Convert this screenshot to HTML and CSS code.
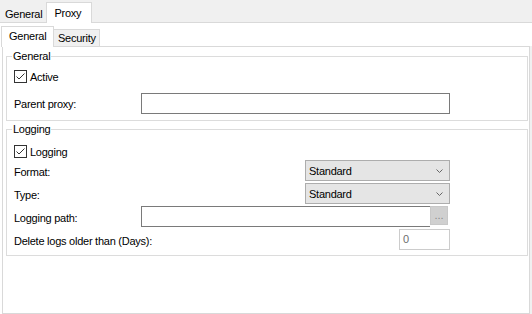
FILE: index.html
```html
<!DOCTYPE html>
<html lang="en">
<head>
  <meta charset="UTF-8" />
  <title>Proxy Settings</title>
  <link rel="stylesheet" href="styles.css">
</head>
<body>
  <div class="window">

    <div class="outer-tabs">
      <div class="tab">General</div>
      <div class="tab active">Proxy</div>
    </div>

    <div class="inner-tabs">
      <div class="tab active">General</div>
      <div class="tab">Security</div>
    </div>

    <div class="page-row">
      <div class="page">

        <!-- General group -->
        <fieldset class="group group-general">
          <legend>General</legend>
          <div class="check-row">
            <span class="check">
              <svg width="13" height="13" viewBox="0 0 13 13"><rect x="0.5" y="0.5" width="12" height="12" fill="#fff" stroke="#333"/><polyline points="2.5,6.5 5,9 10.5,3.5" fill="none" stroke="#333" stroke-width="1"/></svg>
            </span>
            <span>Active</span>
          </div>
          <div class="row row-first">
            <span class="label">Parent proxy:</span>
            <div class="textbox wide"></div>
          </div>
        </fieldset>

        <!-- Logging group -->
        <fieldset class="group group-logging">
          <legend>Logging</legend>
          <div class="check-row">
            <span class="check">
              <svg width="13" height="13" viewBox="0 0 13 13"><rect x="0.5" y="0.5" width="12" height="12" fill="#fff" stroke="#333"/><polyline points="2.5,6.5 5,9 10.5,3.5" fill="none" stroke="#333" stroke-width="1"/></svg>
            </span>
            <span>Logging</span>
          </div>
          <div class="row">
            <span class="label low">Format:</span>
            <div class="select">
              <span>Standard</span>
              <svg width="7" height="4" viewBox="0 0 7 4"><polyline points="0.5,0.5 3.5,3.5 6.5,0.5" fill="none" stroke="#666" stroke-width="1"/></svg>
            </div>
          </div>
          <div class="row">
            <span class="label low">Type:</span>
            <div class="select">
              <span>Standard</span>
              <svg width="7" height="4" viewBox="0 0 7 4"><polyline points="0.5,0.5 3.5,3.5 6.5,0.5" fill="none" stroke="#666" stroke-width="1"/></svg>
            </div>
          </div>
          <div class="row">
            <span class="label low">Logging path:</span>
            <div class="textbox path"></div>
            <div class="browse">...</div>
          </div>
          <div class="row">
            <span class="label low">Delete logs older than (Days):</span>
            <div class="number">0</div>
          </div>
        </fieldset>

      </div>
      <div class="page-edge"></div>
    </div>

  </div>
</body>
</html>
```

FILE: styles.css
```css
body {
  margin: 0;
  font-family: "Liberation Sans", Arial, sans-serif;
  font-size: 11px;
  letter-spacing: -0.25px;
  color: #000;
  background: #fff;
}

.window {
  width: 532px;
  height: 314px;
  overflow: hidden;
}

/* outer tab strip */
.outer-tabs {
  display: flex;
  align-items: flex-end;
  height: 22px;
  background: #f0f0f0;
  border-bottom: 1px solid #d9d9d9;
}

.outer-tabs .tab {
  box-sizing: border-box;
  height: 18px;
  margin-left: 1px;
  padding: 2px 4px 0;
  line-height: 16px;
}

.outer-tabs .tab.active {
  position: relative;
  width: 46px;
  height: 21px;
  margin-left: 0;
  margin-bottom: -1px;
  padding: 2px 0 0 7px;
  background: #fff;
  border: 1px solid #d9d9d9;
  border-bottom: none;
}

/* inner tab strip */
.inner-tabs {
  display: flex;
  align-items: flex-end;
  height: 23px;
  padding-left: 1px;
}

.inner-tabs .tab {
  box-sizing: border-box;
  width: 46px;
  height: 17px;
  padding-left: 4px;
  line-height: 16px;
  background: #f0f0f0;
  border: 1px solid #d9d9d9;
  border-left: none;
  border-bottom: none;
}

.inner-tabs .tab.active {
  position: relative;
  z-index: 1;
  width: 53px;
  height: 21px;
  margin-bottom: -1px;
  padding: 1px 0 0 7px;
  background: #fff;
  border-left: 1px solid #d9d9d9;
}

.page-row {
  display: flex;
  height: 268px;
}

.page {
  box-sizing: border-box;
  width: 528px;
  margin-left: 2px;
  padding: 0 1px 0 3px;
  background: #fff;
  border: 1px solid #d9d9d9;
}

.page-edge {
  width: 2px;
  background: #f0f0f0;
}

/* group boxes */
.group {
  margin: 2px 0 0;
  padding: 0 0 6px 7px;
  min-width: 0;
  border: 1px solid #dcdcdc;
}

.group-logging {
  margin-top: 1px;
  padding-bottom: 5px;
}

.group legend {
  margin-left: -2px;
  padding: 0 1px;
  line-height: 14px;
}

.check-row {
  display: flex;
  align-items: center;
  gap: 3px;
  height: 13px;
  margin-top: 7px;
}

.group-logging .check-row {
  margin-top: 9px;
}

.check {
  display: flex;
  width: 13px;
  height: 13px;
}

.row {
  display: flex;
  align-items: center;
  width: 436px;
  height: 21px;
  margin-top: 2px;
}

.row-first {
  margin-top: 10px;
}

.label {
  flex: 0 0 127px;
  white-space: nowrap;
}

.label.low {
  padding-top: 2px;
}

.textbox {
  box-sizing: border-box;
  height: 21px;
  background: #fff;
  border: 1px solid #7a7a7a;
}

.textbox.wide {
  width: 309px;
}

.textbox.path {
  width: 289px;
  border-right: none;
}

.browse {
  box-sizing: border-box;
  align-self: flex-start;
  width: 18px;
  height: 19px;
  background: #d0d0d0;
  border: 1px solid #c8c8c8;
  color: #8a8a8a;
  text-align: center;
  line-height: 17px;
  letter-spacing: 0;
}

.select {
  box-sizing: border-box;
  display: flex;
  align-items: center;
  justify-content: space-between;
  width: 145px;
  height: 21px;
  margin-left: auto;
  padding: 0 6px 0 3px;
  background: #e5e5e5;
  border: 1px solid #adadad;
}

.number {
  box-sizing: border-box;
  width: 51px;
  height: 21px;
  margin-left: auto;
  padding-left: 3px;
  line-height: 19px;
  color: #6d6d6d;
  border: 1px solid #cccccc;
}
```
